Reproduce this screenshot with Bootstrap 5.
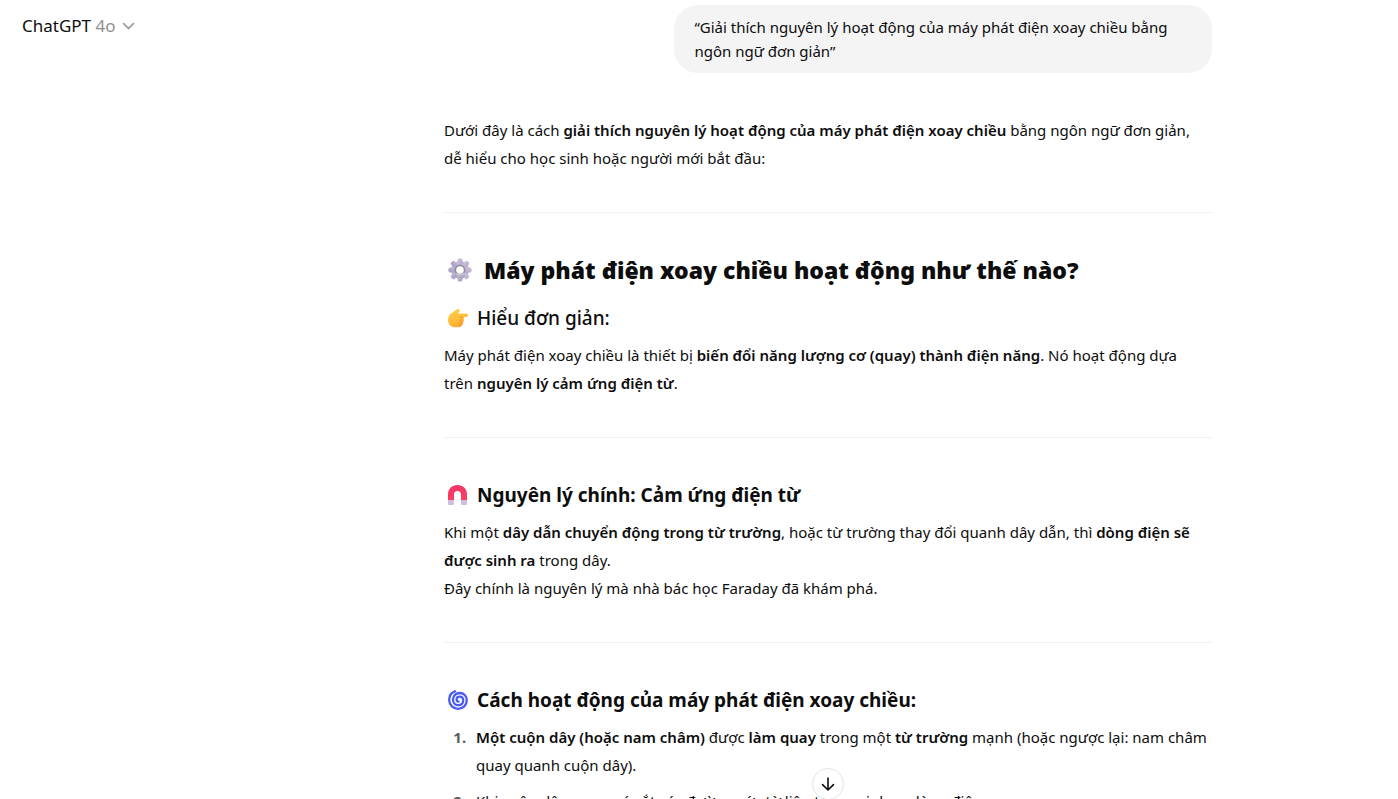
<!DOCTYPE html>
<html lang="vi">
<head>
<meta charset="utf-8">
<meta name="viewport" content="width=device-width, initial-scale=1">
<title>ChatGPT</title>
<link href="https://cdn.jsdelivr.net/npm/bootstrap@5.3.0/dist/css/bootstrap.min.css" rel="stylesheet">
<style>
  body { font-family: "Noto Sans", "Open Sans", sans-serif; font-size: 15px; line-height: 28px; color: #0d0d0d; }
  .model-btn { font-size: 17px; line-height: 24px; color: #0d0d0d; padding: 14px 22px; gap: 6px; }
  .model-btn .version { color: #8f8f8f; }
  .chat-pane { padding-left: 258px; }
  .thread { max-width: 768px; padding-top: 5px; }
  .user-bubble { max-width: 70%; padding: 10px 20px; border-radius: 24px; background: #f4f4f4; line-height: 24px; margin-bottom: 43px; }
  .answer p { margin: 0; }
  .answer strong { font-weight: 600; }
  .answer hr { margin: 40px 0 41px; border-color: #000; opacity: .05; }
  .answer h2 { font-size: 23px; line-height: 32px; font-weight: 900; margin: 0 0 16px; gap: 12px; }
  .answer h3 { font-size: 19px; line-height: 32px; font-weight: 700; margin: 0 0 7px; gap: 9px; }
  .answer h3.light-title { font-weight: 500; }
  .answer h2 svg, .answer h3 svg { margin-left: 4px; flex: none; }
  .answer ol { margin: 0; padding-left: 26px; }
  .answer li { padding-left: 6px; margin-bottom: 8px; }
  .answer li::marker { font-weight: 700; color: #5d5d5d; }
  .scroll-btn { width: 32px; height: 32px; bottom: -1px; border: 1px solid #e3e3e3; background: #fff; color: #0d0d0d; }
  @media (max-width: 991px) { .chat-pane { padding: 52px 16px 0; } }
</style>
</head>
<body class="bg-white">
<div class="position-relative vh-100 overflow-hidden">
  <header class="position-absolute top-0 start-0">
    <button type="button" class="model-btn btn border-0 d-flex align-items-center">
      <span>ChatGPT <span class="version">4o</span></span>
      <svg width="14" height="14" viewBox="0 0 14 14" fill="none" stroke="#8f8f8f" stroke-width="1.5" stroke-linecap="round" stroke-linejoin="round" aria-hidden="true"><path d="M2.500 4.500l5 5 5-5"/></svg>
    </button>
  </header>

  <main class="chat-pane">
    <div class="thread position-relative mx-auto vh-100">
      <div class="d-flex justify-content-end">
        <div class="user-bubble">“Giải thích nguyên lý hoạt động của máy phát điện xoay chiều bằng ngôn ngữ đơn giản”</div>
      </div>

      <article class="answer">
        <p>Dưới đây là cách <strong>giải thích nguyên lý hoạt động của máy phát điện xoay chiều</strong> bằng ngôn ngữ đơn giản,<br>dễ hiểu cho học sinh hoặc người mới bắt đầu:</p>
        <hr>

        <h2 class="d-flex align-items-center">
          <svg width="24" height="24" viewBox="0 0 24 24" aria-hidden="true">
            <defs><linearGradient id="steel" x1="0" y1="0" x2="1" y2="1"><stop offset="0" stop-color="#cdc4de"/><stop offset="1" stop-color="#a89cc2"/></linearGradient></defs>
            <g fill="url(#steel)">
              <circle cx="12" cy="12" r="9"/>
              <rect x="9.6" y="0.4" width="4.8" height="23.2" rx="1.6"/>
              <rect x="9.6" y="0.4" width="4.8" height="23.2" rx="1.6" transform="rotate(45 12 12)"/>
              <rect x="9.6" y="0.4" width="4.8" height="23.2" rx="1.6" transform="rotate(90 12 12)"/>
              <rect x="9.6" y="0.4" width="4.8" height="23.2" rx="1.6" transform="rotate(135 12 12)"/>
            </g>
            <circle cx="12" cy="12" r="4.600" fill="#fff" stroke="#928b9c" stroke-width="1.6"/>
            <path d="M8.500 15.500A5 5 0 0 0 16 15" fill="none" stroke="#d8d2df" stroke-width="1.200"/>
          </svg>
          <span>Máy phát điện xoay chiều hoạt động như thế nào?</span>
        </h2>

        <h3 class="light-title d-flex align-items-center">
          <svg width="20" height="20" viewBox="0 0 20 20" aria-hidden="true">
            <defs><linearGradient id="skin" x1="0" y1="0" x2="0.4" y2="1"><stop offset="0" stop-color="#ffd04a"/><stop offset=".6" stop-color="#ffc03d"/><stop offset="1" stop-color="#fdab35"/></linearGradient></defs>
            <path fill="url(#skin)" d="M0 12C0 8.500 1.700 6 4.700 4.500L8.500 1.500C9.500.400 11.700.800 11.500 2.600C11.300 4 10.500 4.800 9.800 5.500H18.100C20.600 5.500 20.600 9.100 18.100 9.100H14.800C16.200 9.500 16.500 11.400 15.200 12.100C16.100 12.900 15.800 14.500 14.600 14.900C15.400 16 14.700 17.400 13.400 17.500C13.100 18.700 12.100 19.200 10.500 19.200H7C3 19.200 0 16.500 0 12Z"/>
            <path fill="none" stroke="#ed852d" stroke-width=".8" stroke-linecap="round" d="M15 9.200H11.800M15 12.200H12M14.400 15H11.800M13.200 17.500H11.500"/>
          </svg>
          <span>Hiểu đơn giản:</span>
        </h3>
        <p>Máy phát điện xoay chiều là thiết bị <strong>biến đổi năng lượng cơ (quay) thành điện năng</strong>. Nó hoạt động dựa<br>trên <strong>nguyên lý cảm ứng điện từ</strong>.</p>
        <hr>

        <h3 class="d-flex align-items-center">
          <svg width="20" height="20" viewBox="0 0 20 20" aria-hidden="true">
            <defs><linearGradient id="red" x1="0" y1="0" x2="0" y2="1"><stop offset="0" stop-color="#f0386b"/><stop offset="1" stop-color="#fb3d5d"/></linearGradient></defs>
            <path fill="url(#red)" d="M0 15V9.500C0 3.800 4 0 9.500 0S19 3.800 19 9.500V15H13V9.500C13 7.200 11.700 6 9.500 6S6 7.200 6 9.500V15Z"/>
            <path fill="#cdbfdd" d="M0 15H6V19.200Q6 20 5.200 20H.800Q0 20 0 19.200ZM13 15H19V19.200Q19 20 18.200 20H13.800Q13 20 13 19.200Z"/>
          </svg>
          <span>Nguyên lý chính: Cảm ứng điện từ</span>
        </h3>
        <p>Khi một <strong>dây dẫn chuyển động trong từ trường</strong>, hoặc từ trường thay đổi quanh dây dẫn, thì <strong>dòng điện sẽ được sinh ra</strong> trong dây.<br>Đây chính là nguyên lý mà nhà bác học Faraday đã khám phá.</p>
        <hr>

        <h3 class="d-flex align-items-center">
          <svg width="20" height="20" viewBox="0 0 20 20" aria-hidden="true">
            <path fill="none" stroke="#4a5bf5" stroke-width="2.300" stroke-linecap="round" d="M7 1.300C3.300 2.500 1.100 6 1.200 10.200C1.400 15.300 5.300 18.800 10.100 18.800C15 18.800 18.800 15.200 18.800 10.300C18.800 6 15.700 3 11.800 3C7.900 3 5 5.700 5 9.400C5 12.900 7.300 15.200 10.400 15.200C13.300 15.200 15.200 13.200 15.200 10.600C15.200 8.200 13.600 6.700 11.600 6.700C9.800 6.700 8.600 7.900 8.600 9.500C8.600 10.900 9.500 11.600 10.600 11.600"/>
          </svg>
          <span>Cách hoạt động của máy phát điện xoay chiều:</span>
        </h3>
        <ol>
          <li><strong>Một cuộn dây (hoặc nam châm)</strong> được <strong>làm quay</strong> trong một <strong>từ trường</strong> mạnh (hoặc ngược lại: nam châm quay quanh cuộn dây).</li>
          <li>Khi cuộn dây quay, nó cắt các đường sức từ liên tục → sinh ra dòng điện.</li>
        </ol>
      </article>

      <button type="button" class="scroll-btn btn rounded-circle p-0 d-flex align-items-center justify-content-center position-absolute start-50 translate-middle-x" aria-label="Cuộn xuống cuối">
        <svg width="16" height="16" viewBox="0 0 16 16" fill="none" stroke="currentColor" stroke-width="1.600" stroke-linecap="round" stroke-linejoin="round" aria-hidden="true"><path d="M8 2V14M2.500 8.600L8 14L13.500 8.600"/></svg>
      </button>
    </div>
  </main>
</div>
<script src="https://cdn.jsdelivr.net/npm/bootstrap@5.3.0/dist/js/bootstrap.bundle.min.js"></script>
</body>
</html>
